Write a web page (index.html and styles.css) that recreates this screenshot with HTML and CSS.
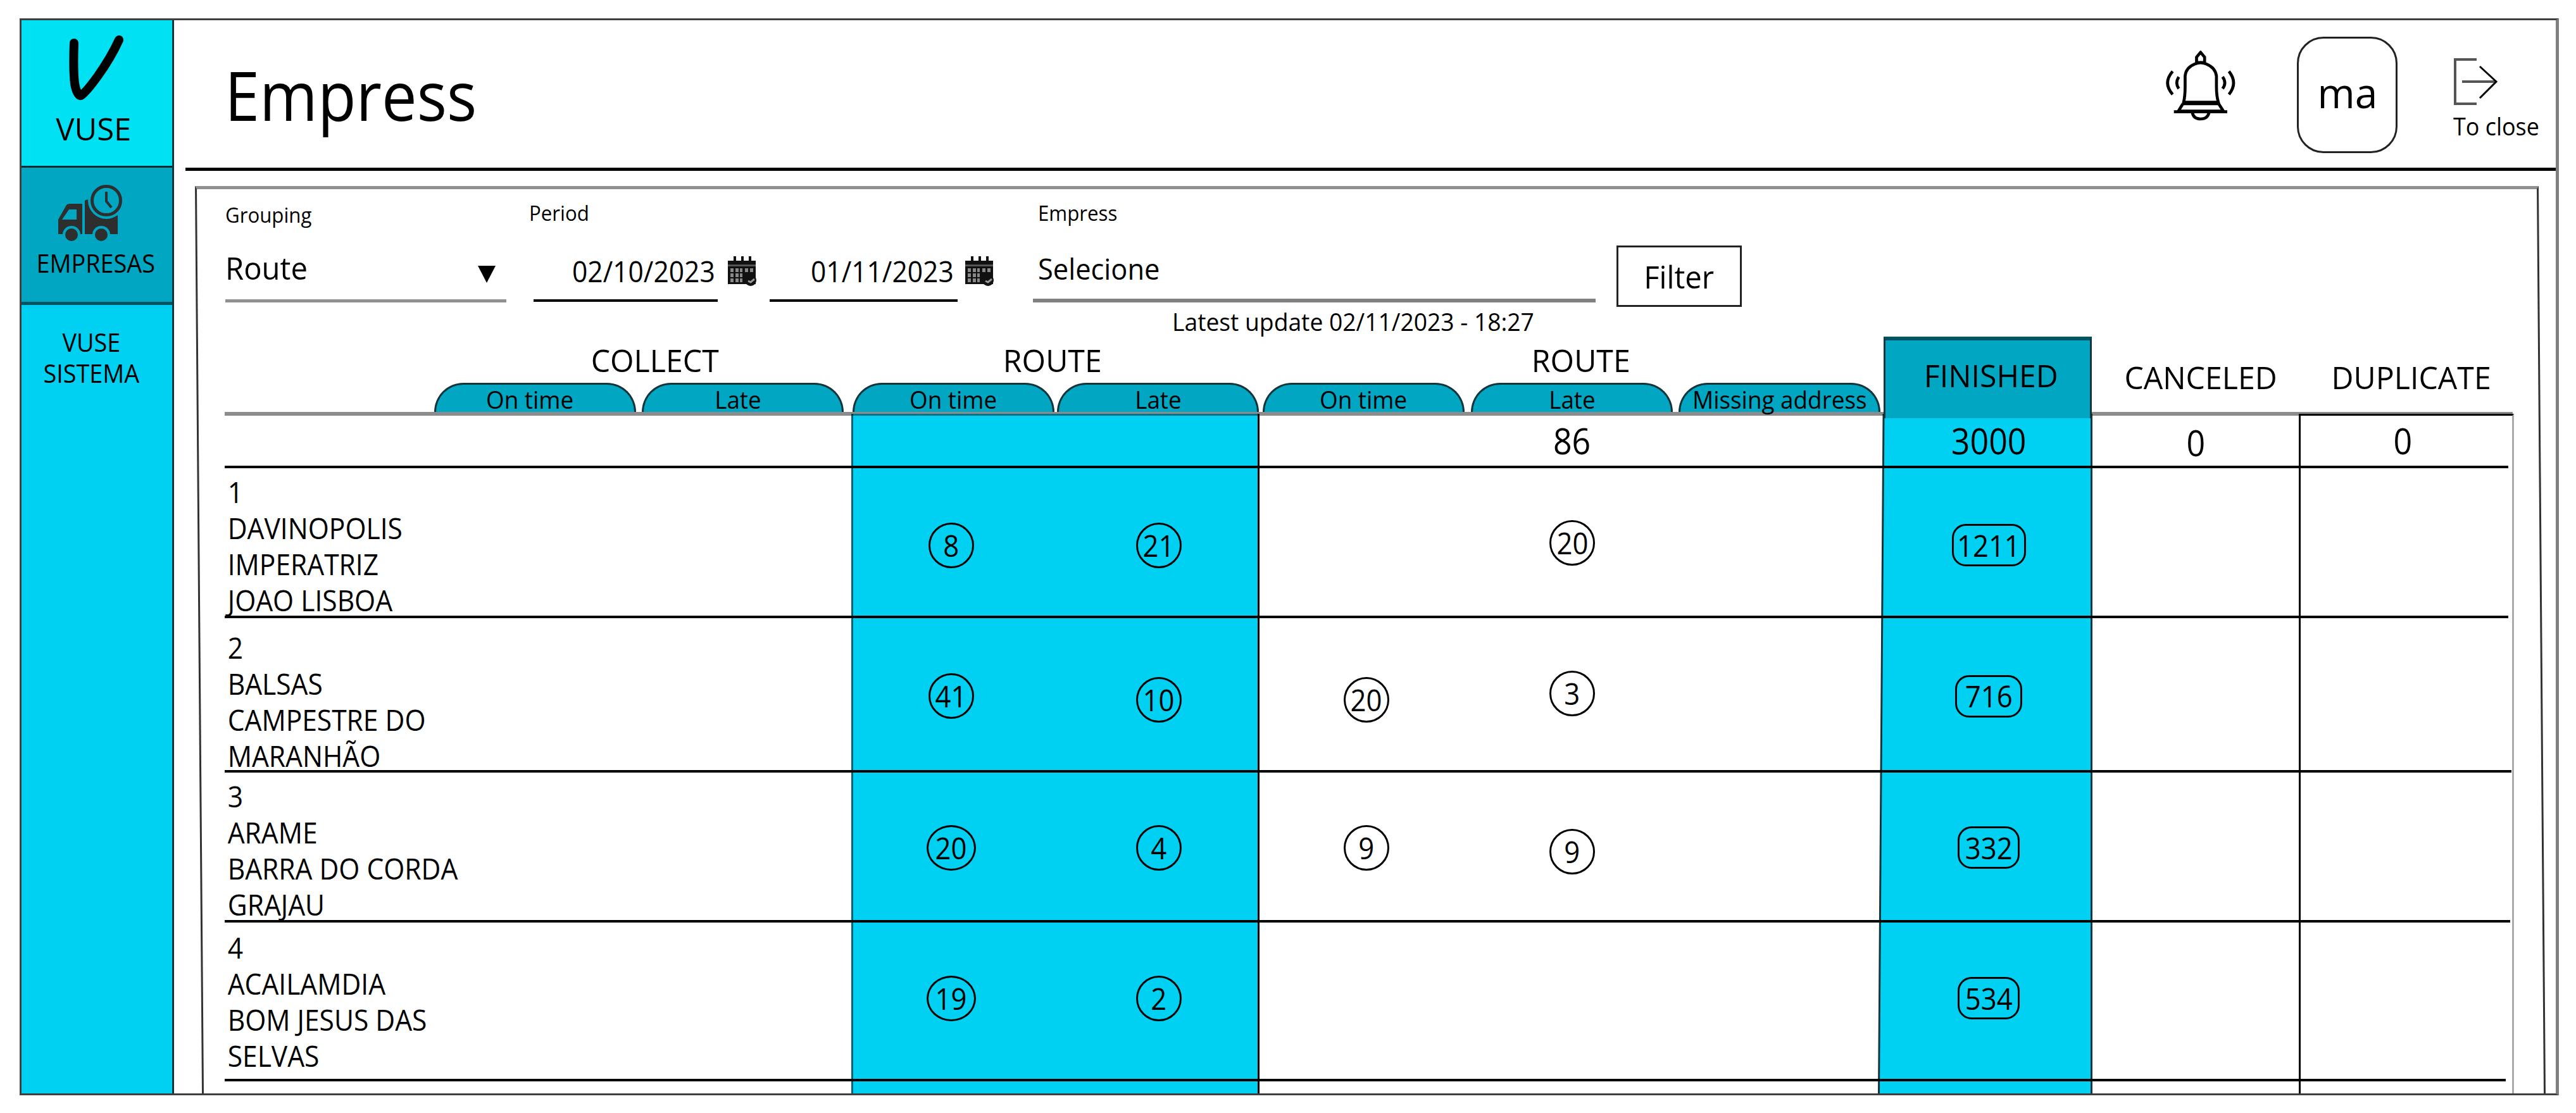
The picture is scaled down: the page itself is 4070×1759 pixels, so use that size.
FILE: index.html
```html
<!DOCTYPE html>
<html lang="pt-BR">
<head>
  <meta charset="UTF-8" />
  <title>VUSE - Empress</title>
  <link rel="stylesheet" href="styles.css">
</head>
<body>
  <div class="frame">
    <nav class="sidebar">
      <div class="brand">
        <svg class="brand-mark" width="92" height="112" viewBox="104 52 92 112" aria-hidden="true">
          <path d="M116 68 C115 95 115 115 117 132 C119 144 123 152 127 151 C136 145 168 105 187 63" />
        </svg>
        <span class="t">VUSE</span>
      </div>
      <a class="menu-item active">
        <svg class="truck" width="104" height="92" viewBox="91 290 104 92" aria-hidden="true">
          <path class="dark" d="M92 370V347L105 324Q107 322 110 322H130V370Z" />
          <path class="bg" d="M98 347L109 331H121V347Z" />
          <path class="dark" d="M134 370V317Q137 315 141 315H186V370Z" />
          <circle class="bg" cx="168" cy="317" r="29" />
          <circle class="ring" cx="168" cy="317" r="22.5" />
          <path class="hand" d="M168 303V318L176 328" />
          <circle class="bg" cx="113" cy="371" r="14" />
          <circle class="bg" cx="160" cy="371" r="14" />
          <circle class="dark" cx="113" cy="371" r="10" />
          <circle class="dark" cx="160" cy="371" r="10" />
        </svg>
        <span class="t">EMPRESAS</span>
      </a>
      <a class="menu-item plain">
        <span class="t">VUSE<br>SISTEMA</span>
      </a>
    </nav>

    <main class="main">
      <header class="header">
        <h1 class="t t-left">Empress</h1>
        <div class="actions">
          <svg class="bell" width="111" height="112" viewBox="65 120 332 335" aria-hidden="true">
            <path d="M232 128L213 151V176H251V151Z" />
            <path d="M152 364Q159 335 159 290V240Q162 200 205 183Q232 172 259 183Q302 200 307 240V290Q307 335 316 364Z" />
            <path class="thick" d="M148 369H318" />
            <path d="M148 372L127 406H340L318 372M106 409H358" />
            <path d="M193 412Q198 443 232 443Q266 443 272 412" />
            <path d="M100 218Q52 273 100 327M366 218Q410 273 366 327M129 244Q110 273 129 300M336 244Q357 273 336 300" />
          </svg>
          <div class="avatar"><span class="t">ma</span></div>
          <a class="close">
            <svg width="72" height="76" viewBox="3876 91 72 76" aria-hidden="true">
              <path class="soft" d="M3913 94H3879V164H3913" />
              <path class="soft" d="M3890 129H3943" />
              <path d="M3918 105L3944 129L3918 155" />
            </svg>
            <span class="t t-left">To close</span>
          </a>
        </div>
      </header>

      <section class="panel">
        <form class="filters">
          <div class="field grouping">
            <label class="t t-left">Grouping</label>
            <div class="value"><span class="t t-left">Route</span><i class="caret"></i></div>
          </div>
          <div class="field period">
            <label class="t t-left">Period</label>
            <div class="dates">
              <div class="value date"><span class="t t-left">02/10/2023</span></div>
              <svg class="calendar" width="48" height="50" viewBox="0 0 48 50" aria-hidden="true"><use href="#cal" /></svg>
              <div class="value date"><span class="t t-left">01/11/2023</span></div>
              <svg class="calendar" width="48" height="50" viewBox="0 0 48 50" aria-hidden="true">
                <g id="cal">
                  <path d="M2 7H46V13H2Z" />
                  <path class="grey" d="M2 13H46V17H2Z" />
                  <path d="M11 0h4v8h-4zM23 0h4v8h-4zM35 0h4v8h-4z" />
                  <path d="M2 16H46V44H2Z" />
                  <path class="day" d="M6 19h5v6H6zM14 19h5v6h-5zM21 19h4v6h-4zM29 19h5v6h-5zM37 19h5v6h-5zM6 27h5v6H6zM14 27h5v6h-5zM21 27h4v6h-4zM6 35h5v6H6zM14 35h5v6h-5zM21 35h4v6h-4z" />
                  <circle cx="38" cy="38" r="9" />
                  <path class="tick" d="M34 39L38 41L44 36" />
                </g>
              </svg>
            </div>
          </div>
          <div class="field company">
            <label class="t t-left">Empress</label>
            <div class="value"><span class="t t-left">Selecione</span></div>
          </div>
          <button class="filter-btn" type="button"><span class="t">Filter</span></button>
        </form>
        <p class="updated"><span class="t t-left">Latest update 02/11/2023 - 18:27</span></p>

        <div class="table">
          <!-- column backgrounds -->
          <div class="stripe stripe-route"></div>
          <svg class="stripe stripe-finished" viewBox="0 0 339 1080" preserveAspectRatio="none" aria-hidden="true">
            <path class="fill" d="M9 0H337V1080H1Z" />
            <path class="edge" d="M9 0L1.500 1080M337.500 0V1080" />
          </svg>
          <div class="stripe stripe-duplicate"></div>

          <div class="row head">
            <div class="group collect">
              <h2><span class="t">COLLECT</span></h2>
              <div class="tab"><span class="t">On time</span></div>
              <div class="tab"><span class="t">Late</span></div>
            </div>
            <div class="group route">
              <h2><span class="t">ROUTE</span></h2>
              <div class="tab"><span class="t">On time</span></div>
              <div class="tab"><span class="t">Late</span></div>
            </div>
            <div class="group delivery">
              <h2><span class="t">ROUTE</span></h2>
              <div class="tab"><span class="t">On time</span></div>
              <div class="tab"><span class="t">Late</span></div>
              <div class="tab"><span class="t">Missing address</span></div>
            </div>
            <div class="title finished"><span class="t">FINISHED</span></div>
            <div class="title"><span class="t">CANCELED</span></div>
            <div class="title"><span class="t">DUPLICATE</span></div>
          </div>

          <div class="row totals">
            <div class="cell c7"><span class="t">86</span></div>
            <div class="cell c9"><span class="t">3000</span></div>
            <div class="cell c10"><span class="t">0</span></div>
            <div class="cell c11"><span class="t">0</span></div>
          </div>

          <div class="row r1">
            <div class="names t t-left">1<br>DAVINOPOLIS<br>IMPERATRIZ<br>JOAO LISBOA</div>
            <div class="cell c4"><span class="badge"><span class="t">8</span></span></div>
            <div class="cell c5"><span class="badge"><span class="t">21</span></span></div>
            <div class="cell c7"><span class="badge high"><span class="t">20</span></span></div>
            <div class="cell c9"><span class="badge pill wide"><span class="t">1211</span></span></div>
          </div>

          <div class="row r2">
            <div class="names t t-left">2<br>BALSAS<br>CAMPESTRE DO<br>MARANHÃO</div>
            <div class="cell c4"><span class="badge"><span class="t">41</span></span></div>
            <div class="cell c5"><span class="badge low"><span class="t">10</span></span></div>
            <div class="cell c6"><span class="badge low"><span class="t">20</span></span></div>
            <div class="cell c7"><span class="badge high"><span class="t">3</span></span></div>
            <div class="cell c9"><span class="badge pill"><span class="t">716</span></span></div>
          </div>

          <div class="row r3">
            <div class="names t t-left">3<br>ARAME<br>BARRA DO CORDA<br>GRAJAU</div>
            <div class="cell c4"><span class="badge big"><span class="t">20</span></span></div>
            <div class="cell c5"><span class="badge"><span class="t">4</span></span></div>
            <div class="cell c6"><span class="badge"><span class="t">9</span></span></div>
            <div class="cell c7"><span class="badge low"><span class="t">9</span></span></div>
            <div class="cell c9"><span class="badge pill small"><span class="t">332</span></span></div>
          </div>

          <div class="row r4">
            <div class="names t t-left">4<br>ACAILAMDIA<br>BOM JESUS DAS<br>SELVAS</div>
            <div class="cell c4"><span class="badge big high"><span class="t">19</span></span></div>
            <div class="cell c5"><span class="badge high"><span class="t">2</span></span></div>
            <div class="cell c9"><span class="badge pill small high"><span class="t">534</span></span></div>
          </div>
        </div>
      </section>
    </main>
  </div>
</body>
</html>
```
FILE: styles.css
```css
* {
  box-sizing: border-box;
}

body {
  margin: 0;
  height: 1759px;
  padding: 29px 27px 28px 31px;
  background: #fff;
  color: #000;
  font-family: "Open Sans", "Noto Sans", sans-serif;
  font-size: 45px;
  line-height: 1;
}

h1, h2, p {
  margin: 0;
  font-weight: 400;
}

svg {
  display: block;
  flex: none;
}

/* slightly condensed text */
.t {
  display: inline-block;
  transform: scaleX(0.945);
  white-space: nowrap;
}
.t-left {
  transform-origin: 0 50%;
}

.frame {
  display: flex;
  height: 100%;
  border: 3px solid #3f3f3f;
  border-right: 5px solid #808080;
}

/* Sidebar */
.sidebar {
  width: 241px;
  flex: none;
  background: #00d0f2;
  border-right: 3px solid #14343a;
  text-align: center;
}
.brand {
  height: 233px;
  padding: 20px 5px 0 0;
  display: flex;
  flex-direction: column;
  align-items: center;
  gap: 14px;
  background: #00e2f4;
  border-bottom: 3px solid #0b2a2d;
  font-size: 50px;
}
.brand-mark path {
  fill: none;
  stroke: #000;
  stroke-width: 14;
  stroke-linecap: round;
  stroke-linejoin: round;
}
.brand .t {
  margin-right: 5px;
  transform: scaleX(0.98);
}
.menu-item {
  display: flex;
  flex-direction: column;
  align-items: center;
  font-size: 40px;
}
.menu-item.active {
  height: 217px;
  padding-top: 25px;
  gap: 14px;
  background: #00a6c2;
  border-bottom: 5px solid #005360;
}
.menu-item.active .t {
  margin-right: 4px;
}
.menu-item.plain {
  padding: 34px 18px 0 0;
  line-height: 49px;
}
.truck {
  margin-left: -20px;
}
.truck .dark { fill: #2e2e2e; }
.truck .bg { fill: #00a6c2; }
.truck .ring {
  fill: none;
  stroke: #2e2e2e;
  stroke-width: 5;
}
.truck .hand {
  fill: none;
  stroke: #2e2e2e;
  stroke-width: 4;
}

.main {
  flex: 1;
  display: flex;
  flex-direction: column;
}

/* Header */
.header {
  height: 238px;
  margin-left: 18px;
  padding: 0 26px 0 62px;
  display: flex;
  justify-content: space-between;
  border-bottom: 5px solid #000;
}
.header h1 {
  font-size: 108px;
  line-height: 236px;
  transform: scaleX(0.918);
}
.actions {
  display: flex;
  align-items: flex-start;
}
.bell {
  margin: 48px 97px 0 0;
}
.bell path {
  fill: none;
  stroke: #000;
  stroke-width: 14;
}
.bell .thick {
  stroke-width: 18;
}
.avatar {
  width: 159px;
  height: 184px;
  margin: 26px 88px 0 0;
  border: 3px solid #222;
  border-radius: 42px;
  text-align: center;
  font-size: 66px;
  line-height: 168px;
}
.avatar .t {
  transform: scaleX(0.97);
}
.close {
  width: 136px;
  margin-top: 59px;
  display: flex;
  flex-direction: column;
  gap: 12px;
  font-size: 38px;
  line-height: 40px;
}
.close path {
  fill: none;
  stroke: #000;
  stroke-width: 3;
}
.close .soft {
  stroke: #555;
  stroke-width: 4;
}

/* Panel: its sides lean a little */
.panel {
  position: relative;
  flex: 1;
  margin: 24px 27px 0 33px;
  padding-left: 47px;
}
.panel::before {
  content: "";
  position: absolute;
  inset: 0;
  border: 3px solid #333;
  border-top: 5px solid #909090;
  border-bottom: 0;
  transform: skewX(0.44deg);
  transform-origin: 0 0;
  pointer-events: none;
}

/* Filters */
.filters {
  height: 190px;
  padding-left: 1px;
  display: flex;
}
.field {
  height: 184px;
  display: flex;
  flex-direction: column;
}
.field label {
  font-size: 33px;
  line-height: 34px;
}
.value {
  flex: 1;
  display: flex;
  justify-content: space-between;
  align-items: flex-start;
  border-bottom: 5px solid #909090;
  line-height: 50px;
}
.grouping {
  width: 444px;
  padding-top: 29px;
}
.grouping .value {
  padding-top: 41px;
  font-size: 50px;
}
.caret {
  width: 28px;
  height: 27px;
  margin: 22px 17px 0 0;
  background: #000;
  clip-path: polygon(0 0, 100% 0, 50% 100%);
}
.period {
  margin-left: 36px;
  padding-top: 26px;
}
.dates {
  flex: 1;
  display: flex;
  padding-left: 7px;
}
.date {
  flex: none;
  width: 291px;
  padding: 50px 0 0 61px;
  margin-bottom: 1px;
  border-bottom: 4px solid #000;
}
.date + .calendar + .date {
  width: 297px;
  padding-left: 65px;
  margin-left: 20px;
}
.calendar {
  margin: 51px 0 0 14px;
  fill: #111;
}
.date + .calendar + .date + .calendar {
  margin-left: 10px;
}
.calendar .grey { fill: #555; }
.calendar .day { fill: #888; }
.calendar .tick {
  fill: none;
  stroke: #999;
  stroke-width: 3;
}
.company {
  width: 889px;
  margin-left: 61px;
  padding-top: 26px;
}
.company label {
  margin-left: 8px;
}
.company .value {
  padding: 46px 0 0 8px;
  border-bottom: 6px solid #808080;
}
.company .value .t {
  transform: scaleX(0.965);
}
.filter-btn {
  width: 198px;
  height: 97px;
  margin: 94px 0 0 33px;
  padding: 0;
  border: 3px solid #222;
  background: #fff;
  color: #000;
  font: 50px/1 "Open Sans", "Noto Sans", sans-serif;
}
.updated {
  height: 48px;
  padding-left: 1497px;
  font-size: 38px;
  line-height: 49px;
}
.updated .t {
  transform: scaleX(0.98);
}

/* Table */
.table {
  display: grid;
  grid-template-columns: 325px 328px 337px 323px 321px 329px 328px 330px 329px 329px 338px;
  grid-template-rows: 125px 83px 237px 244px 237px 251px 19px;
  width: 3617px;
}
.row {
  grid-column: 1 / -1;
  display: grid;
  grid-template-columns: subgrid;
  margin-right: 9px;
  border-bottom: 4px solid #000;
}
.head {
  grid-row: 1;
  margin-right: 2px;
  border-bottom: 6px solid rgba(0, 0, 0, 0.45);
}
.totals { grid-row: 2; }
.r1 { grid-row: 3; }
.r2 { grid-row: 4; margin-right: 4px; }
.r3 { grid-row: 5; margin-right: 6px; }
.r4 { grid-row: 6; margin-right: 13px; }

.stripe {
  grid-row: 2 / -1;
  margin-top: -3px;
}
.stripe-route {
  grid-column: 4 / 6;
  margin-right: -1px;
  background: #00d0f2;
  border-left: 3px solid #006478;
  border-right: 3px solid #000;
}
.stripe-finished {
  grid-column: 9;
  width: 339px;
  height: 1074px;
  margin-left: -9px;
}
.stripe-finished .fill { fill: #00d0f2; }
.stripe-finished .edge {
  fill: none;
  stroke: #12343a;
  stroke-width: 3;
}
.stripe-duplicate {
  grid-column: 11;
  margin-left: -2px;
  border: 3px solid #000;
  border-right-color: #aaa;
  border-bottom: 0;
}

/* Table head */
.group {
  display: grid;
  grid-template-columns: subgrid;
  grid-template-rows: 73px 46px;
}
.group h2 {
  grid-column: 1 / -1;
  font-size: 50px;
  line-height: 75px;
  text-align: center;
}
.group h2 .t,
.title .t {
  transform: scaleX(0.965);
}
.collect { grid-column: 2 / 4; }
.collect h2 { padding-left: 44px; }
.route { grid-column: 4 / 6; }
.route h2 { padding-right: 8px; }
.delivery { grid-column: 6 / 9; }
.delivery h2 { padding-left: 30px; }
.tab {
  width: 319px;
  margin-left: 6px;
  background: #00a6c2;
  border: 3px solid #12343a;
  border-bottom: 0;
  border-radius: 46px 46px 0 0;
  text-align: center;
  font-size: 39px;
  line-height: 46px;
}
.collect .tab { padding-right: 16px; }
.route .tab { margin-left: 2px; }
.title {
  font-size: 50px;
  line-height: 129px;
  text-align: center;
  padding-left: 16px;
}
.finished {
  padding-left: 10px;
  line-height: 110px;
  background: #00a6c2;
  border: 3px solid #12343a;
  border-top: 6px solid #00535f;
  border-bottom: 0;
}

/* Table cells */
.names {
  grid-column: 1 / 3;
  grid-row: 1;
  padding-left: 5px;
  line-height: 57px;
}
.r1 .names { padding-top: 9px; }
.r2 .names { padding-top: 18px; }
.r3 .names { padding-top: 9px; }
.r4 .names { padding-top: 11px; }
.cell {
  grid-row: 1;
  display: flex;
  align-items: center;
  justify-content: center;
}
.totals .cell {
  font-size: 57px;
}
.totals .t,
.badge .t {
  transform: scaleX(0.91);
}
.c4 { grid-column: 4; padding-right: 8px; }
.c5 { grid-column: 5; padding-left: 4px; }
.c6 { grid-column: 6; padding-left: 10px; }
.c7 { grid-column: 7; padding-left: 4px; }
.c9 { grid-column: 9; padding-left: 3px; }
.c10 { grid-column: 10; padding-top: 5px; }
.c11 { grid-column: 11; padding-right: 4px; }
.r1 .cell { padding-top: 6px; }
.badge {
  width: 72px;
  height: 72px;
  display: flex;
  align-items: center;
  justify-content: center;
  border: 3px solid #000;
  border-radius: 50%;
  font-size: 48px;
}
.badge.big { width: 78px; }
.badge.low { margin-top: 12px; }
.badge.high { margin-bottom: 8px; }
.badge.pill {
  width: 106px;
  height: 67px;
  border-radius: 22px;
}
.badge.wide { width: 117px; }
.badge.small { width: 98px; }
```
